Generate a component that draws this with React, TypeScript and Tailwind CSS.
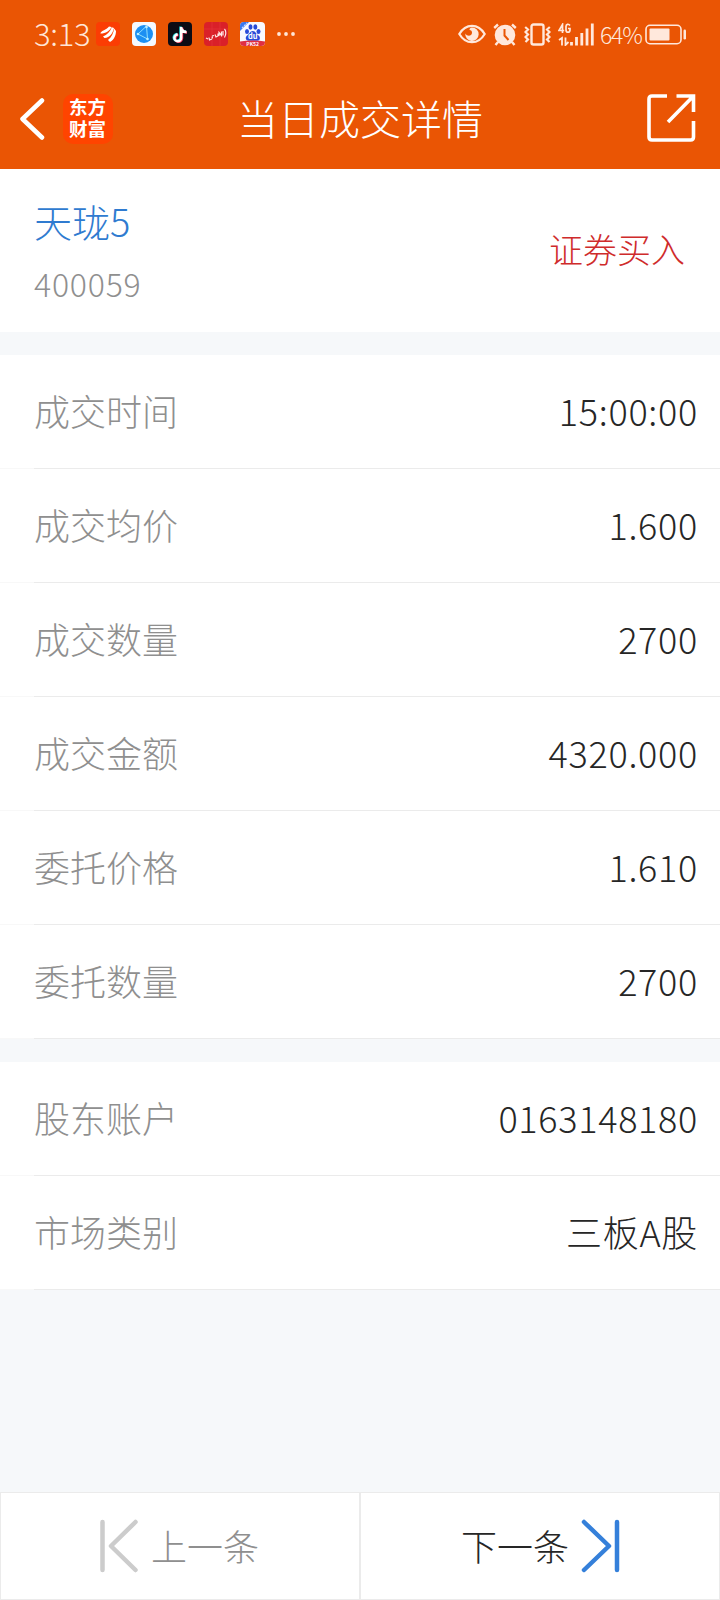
import React from 'react';

type Field = { label: string; value: string };

const dealFields: Field[] = [
    { label: '成交时间', value: '15:00:00' },
    { label: '成交均价', value: '1.600' },
    { label: '成交数量', value: '2700' },
    { label: '成交金额', value: '4320.000' },
    { label: '委托价格', value: '1.610' },
    { label: '委托数量', value: '2700' },
];

const accountFields: Field[] = [
    { label: '股东账户', value: '0163148180' },
    { label: '市场类别', value: '三板A股' },
];

// Iconos de las apps en la barra de estado
function AppIcons() {
    return (
        <div className="flex items-center gap-3">
            <svg width="24" height="24" viewBox="0 0 24 24">
                <rect width="24" height="24" rx="4" fill="#fb3d04" />
                <path d="M4.500 11C5.500 8.500 10 8 13 4.500L15.500 5C13.500 9 10 11.500 4.500 11.500ZM7 14.500C11 13 14 10 15.800 5.300L18 6C17 11 14 15.500 8.500 16ZM12 18C15.500 15.500 17.500 11 18.200 6.500L20 9C20 13 18 18 14 20Z" fill="#fff" />
            </svg>
            <svg width="24" height="24" viewBox="0 0 24 24">
                <rect width="24" height="24" rx="4" fill="#f4f9ff" />
                <circle cx="12" cy="12" r="9" fill="#1c8ff2" />
                <path d="M14.500 4L6 12L15.500 17Z" fill="none" stroke="#8fe0ff" strokeWidth="1" />
                <circle cx="14.500" cy="5" r="1.300" fill="#b9efff" />
                <circle cx="6" cy="12" r="1.300" fill="#b9efff" />
                <circle cx="15.500" cy="17" r="1.300" fill="#b9efff" />
            </svg>
            <svg width="24" height="24" viewBox="0 0 24 24" fill="none" strokeWidth="2.400">
                <rect width="24" height="24" rx="4" fill="#0c0b14" />
                <path d="M12.500 4.500V15.500A3.400 3.400 0 1 1 9 12M12.500 5C13 8 15 9.500 18 9.500" stroke="#2de2e6" />
                <path d="M14 5.500V16.500A3.400 3.400 0 1 1 10.500 13M14 6C14.500 9 16 10.500 19 10.500" stroke="#f6355c" />
                <path d="M13.200 5V16A3.400 3.400 0 1 1 9.800 12.500M13.200 5.500C13.700 8.500 15.500 10 18.500 10" stroke="#fff" />
            </svg>
            <svg width="24" height="24" viewBox="0 0 24 24" fill="none">
                <rect width="24" height="24" rx="4" fill="#da2029" />
                <path d="M0 7H24M8 0V24M16 0V24" stroke="#e63b40" strokeWidth=".5" />
                <path d="M2 16L4 17M5 15.500L5.500 18L8 17M8 14L10 13.500M8 14.500L8.500 16.500M11 12.500L12 15L14 14V11.500M15 14V10.500L17.500 13.500V9.500M19 9V13.500M20.500 7C22.500 9 22 13 20.500 15.500" stroke="#ffe9e6" strokeWidth="1.200" />
            </svg>
            <svg width="25" height="24" viewBox="0 0 25 24">
                <rect width="25" height="24" rx="4" fill="#f8f9ff" />
                <path d="M0 9V4Q0 0 4 0H9Z" fill="#3b78ee" />
                <path d="M2 6L7 1" stroke="#c8dcff" strokeWidth="1.200" strokeDasharray="2 1" />
                <g fill="#294bd8">
                    <ellipse cx="7" cy="9.500" rx="2" ry="2.600" />
                    <ellipse cx="10.500" cy="5" rx="2" ry="2.700" />
                    <ellipse cx="15.300" cy="5" rx="2" ry="2.700" />
                    <ellipse cx="18.500" cy="9.500" rx="2" ry="2.600" />
                    <path d="M12.800 9C10 9 9.500 12 7 13.500C4.500 15.500 6 19 9 18.700H17C20 19 21 15.500 18.500 13.500C16 12 15.500 9 12.800 9Z" />
                </g>
                <path d="M0 19.500Q12 17.500 25 19.500V20Q25 24 21 24H4Q0 24 0 20Z" fill="#df2f43" />
                <text x="12.700" y="17.300" fontSize="7.500" fontWeight="700" textAnchor="middle" fill="#fff">du</text>
                <text x="12.700" y="23.500" fontSize="5" fontWeight="700" textAnchor="middle" fill="#fff">PK52</text>
            </svg>
            <svg width="19" height="4" viewBox="0 0 19 4" fill="#ffe6d8">
                <circle cx="2" cy="2" r="1.900" />
                <circle cx="9" cy="2" r="1.900" />
                <circle cx="16" cy="2" r="1.900" />
            </svg>
        </div>
    );
}

function SystemIcons() {
    return (
        <div className="flex items-center text-[#ffe8dc]">
            <svg width="28" height="20" viewBox="0 0 28 20" fill="none">
                <path d="M1.300 10C4.500 4.500 9 1.800 14 1.800S23.500 4.500 26.700 10C23.500 15.500 19 18.200 14 18.200S4.500 15.500 1.300 10Z" stroke="currentColor" strokeWidth="2.200" />
                <path d="M14 3.500A6.700 6.700 0 1 1 7.300 9.500C9 12.500 13.500 12.500 14 9C14.200 7 13 6 11.500 6C11.500 4.800 12.500 3.600 14 3.500Z" fill="currentColor" />
            </svg>
            <svg className="ml-[7px]" width="24" height="23" viewBox="0 0 24 23" fill="none">
                <circle cx="12" cy="12" r="10.300" fill="currentColor" />
                <path d="M1.200 5L5 1.500M22.800 5L19 1.500M5 19L2.500 22M19 19L21.500 22" stroke="currentColor" strokeWidth="2.400" />
                <path d="M11.500 6V12.500L15.500 17" stroke="#ea5504" strokeWidth="2" />
            </svg>
            <svg className="ml-[7px]" width="27" height="23" viewBox="0 0 27 23" fill="none" stroke="currentColor">
                <rect x="7.500" y="1.500" width="12" height="20" rx="2" strokeWidth="2.400" />
                <path d="M1.200 4L4 6.500L1.500 9L4 11.500L1.500 14L4 16.500L1.500 19M25.800 4L23 6.500L25.500 9L23 11.500L25.500 14L23 16.500L25.500 19" strokeWidth="2.200" />
            </svg>
            <svg className="ml-[7px]" width="36" height="23" viewBox="0 0 36 23" fill="none" stroke="currentColor">
                <path d="M4.500 10V1.500L1 7.500H6.200M12 2.500C10.500 .5 8 1 8 3.500V7C8 10 12 10 12 7V5.500H10" strokeWidth="1.700" />
                <path d="M1 17L4 15V22.500M7.500 14.500V22L10.500 19" strokeWidth="1.800" />
                <path d="M13.500 19V22.500M18.500 14V22.500M23.800 10V22.500M29 5.500V22.500M34.300 .5V22.500" strokeWidth="2.800" />
            </svg>
            <span className="ml-[6px] w-[45px] whitespace-nowrap pb-px text-[23px] leading-6 font-light tracking-[-1.200px]">64%</span>
            <svg width="42" height="21" viewBox="0 0 42 21" fill="none">
                <rect x="1" y="1.300" width="35" height="18.400" rx="4" stroke="currentColor" strokeWidth="1.600" />
                <rect x="4.500" y="4.500" width="20" height="12" rx="1" fill="currentColor" />
                <rect x="38.500" y="5.500" width="2.500" height="10" rx="1.200" fill="currentColor" />
            </svg>
        </div>
    );
}

function FieldRow({ label, value }: Field) {
    return (
        <div className="h-[114px] bg-white">
            <div className="flex h-[113px] items-center justify-between pl-[34px] pr-[22px] pb-[3px] text-[36px] font-light">
                <span className="text-[#8f8f8f]">{label}</span>
                <span className="tracking-[0.7px] text-[#262626]">{value}</span>
            </div>
            <div className="flex h-px bg-[#f8f8f8] pl-[34px]">
                <div className="flex-1 bg-[#ebebeb]" />
            </div>
        </div>
    );
}

export default function App() {
    return (
        <div className="flex h-[1600px] w-[720px] flex-col overflow-hidden bg-[#f6f8fa] font-['Noto_Sans_CJK_SC',sans-serif] leading-none">
            <header className="h-[169px] bg-[#ea5504] text-white">
                <div className="flex h-[68px] items-center justify-between pl-[34px] pr-[33px]">
                    <div className="flex items-center">
                        <span className="w-[62px] whitespace-nowrap pb-[3px] text-[31px] leading-8 font-light tracking-[-0.3px] text-[#ffe6d8]">3:13</span>
                        <AppIcons />
                    </div>
                    <SystemIcons />
                </div>
                <div className="flex h-[101px] items-center">
                    <div className="flex w-[220px] items-center pl-[19px]">
                        <svg width="26" height="42" viewBox="0 0 26 42" fill="none">
                            <path d="M23 2.500L3.500 21L23 39.500" stroke="#fff" strokeWidth="4.500" strokeLinecap="round" strokeLinejoin="round" />
                        </svg>
                        <div className="ml-[18px] flex h-[50px] w-[50px] items-center justify-center rounded-[10px] bg-[#ff4400] pb-[3px]">
                            <span className="w-[38px] text-[18.500px] leading-[22px] font-bold break-all">东方财富</span>
                        </div>
                    </div>
                    <h1 className="w-[280px] pb-[4px] text-center text-[41px] leading-[50px] font-light">当日成交详情</h1>
                    <div className="flex w-[220px] justify-end pr-[24px]">
                        <svg width="49" height="49" viewBox="0 0 49 49" fill="none" stroke="#fff" strokeWidth="3.600">
                            <path d="M20 2H5Q2 2 2 5V43Q2 46 5 46H43.500Q46.500 46 46.500 43V27M29.500 2H46.500V18M46 2.500L21 28" />
                        </svg>
                    </div>
                </div>
            </header>

            <section className="flex h-[163px] items-center justify-between bg-white pl-[34px] pr-[35px] font-light">
                <div className="flex flex-col gap-[27px] pb-px">
                    <span className="text-[38px] text-[#2f7bd0]">天珑5</span>
                    <span className="text-[32px] tracking-[0.8px] text-[#8f8f8f]">400059</span>
                </div>
                <span className="pb-[3px] text-[34px] text-[#cf2b2b]">证券买入</span>
            </section>

            <section className="mt-[23px]">
                {dealFields.map((field) => (
                    <FieldRow key={field.label} label={field.label} value={field.value} />
                ))}
            </section>

            <section className="mt-[23px]">
                {accountFields.map((field) => (
                    <FieldRow key={field.label} label={field.label} value={field.value} />
                ))}
            </section>

            <footer className="mt-auto flex h-[108px] bg-white text-[36px] font-light">
                <button className="flex w-[360px] items-center border border-[#ebebeb] pl-[98px] text-[#8f8f8f]">
                    <svg width="40" height="54" viewBox="0 0 40 54" fill="none" stroke="#cccccc" strokeWidth="4.500" strokeLinecap="round" strokeLinejoin="round">
                        <path d="M3.500 3V51M36.500 3L12 27L36.500 51" />
                    </svg>
                    <span className="ml-[12px] pb-[3px]">上一条</span>
                </button>
                <button className="flex w-[360px] items-center border border-[#ebebeb] pl-[100px] text-[#262626]">
                    <span className="pb-[3px]">下一条</span>
                    <svg className="ml-[12px]" width="40" height="54" viewBox="0 0 40 54" fill="none" stroke="#3580da" strokeWidth="4.500" strokeLinecap="round" strokeLinejoin="round">
                        <path d="M3 3L28 27L3 51M36 3V51" />
                    </svg>
                </button>
            </footer>
        </div>
    );
}
